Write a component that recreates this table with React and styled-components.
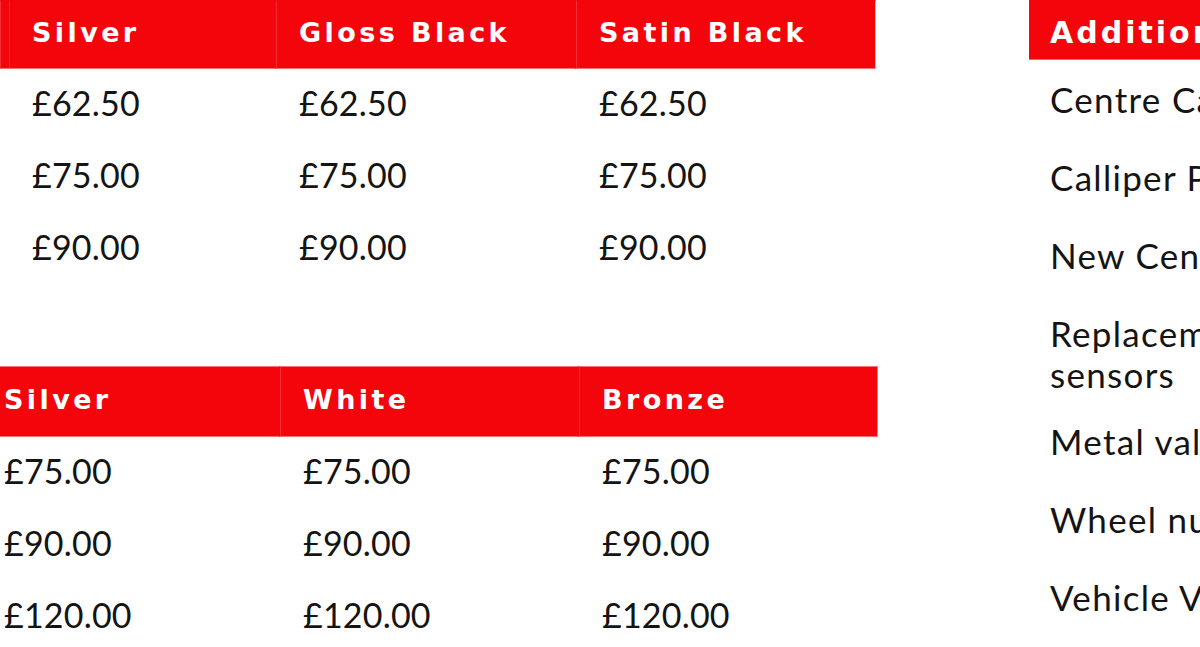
import React from 'react';
import styled, { createGlobalStyle } from 'styled-components';

const RED = '#f3050b';

const GlobalStyle = createGlobalStyle`
  html, body {
    margin: 0;
    padding: 0;
    overflow: hidden;
    background: #fff;
  }
  body {
    font-family: Lato, "Liberation Sans", sans-serif;
    color: #141414;
  }
`;

const Page = styled.div`
  display: flex;
  align-items: flex-start;
  width: 1200px;
  height: 647px;
  overflow: hidden;
`;

const Prices = styled.div`
  display: flex;
  flex-direction: column;
  gap: 81px;
  width: 878px;
  flex-shrink: 0;
`;

const Table = styled.div`
  display: grid;
  grid-template-columns: ${(p) => p.$cols.map((c) => `${c}px`).join(' ')};
  grid-template-rows: ${(p) => p.$headHeight}px;
  grid-auto-rows: 72px;
  margin-left: ${(p) => p.$offset}px;
  width: max-content;
`;

const HeadCell = styled.div`
  box-sizing: border-box;
  display: flex;
  align-items: center;
  padding: 0 0 4px 22px;
  background: ${RED};
  border-left: 1px solid rgba(255, 255, 255, 0.16);
  border-right: 1px solid ${(p) => (p.$last ? p.$edge : 'transparent')};
  border-top: 1px solid ${(p) => p.$top};
  border-bottom: 1px solid rgba(255, 140, 140, 0.8);
  color: #fff;
  font-family: "DejaVu Sans", "Liberation Sans", sans-serif;
  font-weight: 700;
  font-size: 27px;
  letter-spacing: 3.4px;
  white-space: nowrap;
`;

const Cell = styled.div`
  display: flex;
  align-items: center;
  padding: 0 0 6px 23px;
  font-size: 34px;
  letter-spacing: 0.2px;
  white-space: nowrap;
`;

const Extras = styled.div`
  flex-shrink: 0;
  width: 380px;
  margin-left: 151px;
`;

const ExtrasHead = styled.div`
  display: flex;
  align-items: center;
  height: 60px;
  padding: 6px 0 0 21px;
  box-sizing: border-box;
  background: ${RED};
  border-bottom: 1px solid rgba(255, 120, 120, 0.8);
  color: #fff;
  font-family: "DejaVu Sans", "Liberation Sans", sans-serif;
  font-weight: 700;
  font-size: 30px;
  letter-spacing: 3px;
  white-space: nowrap;
`;

const ExtraItem = styled.div`
  padding: ${(p) => (p.$wrap ? '19px 0 7.5px 21px' : '16.5px 0 16.5px 21px')};
  font-size: 35px;
  letter-spacing: 1.3px;
  line-height: ${(p) => (p.$wrap ? '41px' : '45px')};
`;

const tables = [
  {
    cols: [9, 267, 300, 300],
    offset: 0,
    headHeight: 69,
    top: RED,
    edge: '#c9c9c9',
    heads: ['', 'Silver', 'Gloss Black', 'Satin Black'],
    rows: [
      ['', '£62.50', '£62.50', '£62.50'],
      ['', '£75.00', '£75.00', '£75.00'],
      ['', '£90.00', '£90.00', '£90.00'],
    ],
  },
  {
    cols: [299, 299, 299],
    offset: -19,
    headHeight: 71,
    top: 'rgba(255, 130, 130, 0.9)',
    edge: 'rgba(255, 150, 150, 0.8)',
    heads: ['Silver', 'White', 'Bronze'],
    rows: [
      ['£75.00', '£75.00', '£75.00'],
      ['£90.00', '£90.00', '£90.00'],
      ['£120.00', '£120.00', '£120.00'],
    ],
  },
];

const extras = [
  'Centre Caps',
  'Calliper Painting',
  'New Centre Caps',
  'Replacement TPMS sensors',
  'Metal valves',
  'Wheel nuts',
  'Vehicle Valet',
];

const PriceTable = ({ t }) => (
  <Table $cols={t.cols} $offset={t.offset} $headHeight={t.headHeight}>
    {t.heads.map((h, i) => (
      <HeadCell key={`h${i}`} $top={t.top} $edge={t.edge} $last={i === t.heads.length - 1}>
        {h}
      </HeadCell>
    ))}
    {t.rows.map((row, r) =>
      row.map((v, c) => <Cell key={`${r}-${c}`}>{v}</Cell>)
    )}
  </Table>
);

const App = () => (
  <>
    <GlobalStyle />
    <Page>
      <Prices>
        {tables.map((t, i) => (
          <PriceTable key={i} t={t} />
        ))}
      </Prices>
      <Extras>
        <ExtrasHead>Additional Extras</ExtrasHead>
        {extras.map((e) => (
          <ExtraItem key={e} $wrap={e.length > 20}>
            {e}
          </ExtraItem>
        ))}
      </Extras>
    </Page>
  </>
);

export default App;
